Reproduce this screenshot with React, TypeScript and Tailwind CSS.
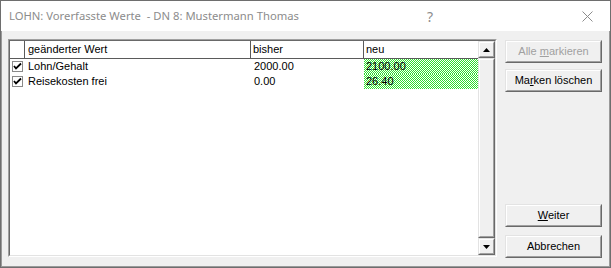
import React from "react";

const rows = [
  { label: "Lohn/Gehalt", bisher: "2000.00", neu: "2100.00" },
  { label: "Reisekosten frei", bisher: "0.00", neu: "26.40" },
];

const Raised = ({
  className = "",
  children,
}: {
  className?: string;
  children?: React.ReactNode;
}) => (
  <div
    className={`border border-t-[#e3e3e3] border-l-[#e3e3e3] border-b-[#696969] border-r-[#696969] bg-[#f0f0f0] ${className}`}
  >
    <div className="w-full h-full border border-t-white border-l-white border-b-[#a0a0a0] border-r-[#a0a0a0] flex items-center justify-center">
      {children}
    </div>
  </div>
);

const CheckBox = () => (
  <svg width="11" height="11" viewBox="0 0 11 11">
    <rect x="0.5" y="0.5" width="10" height="10" fill="#fff" stroke="#8a8a8a" />
    <path d="M2 5 L4 7.5 L9 2.5" fill="none" stroke="#000" strokeWidth="1.8" />
  </svg>
);

// dithered green selection marker
const Dither = ({ id }: { id: string }) => (
  <svg className="absolute inset-0 w-full h-full" shapeRendering="crispEdges">
    <defs>
      <pattern id={id} width="2" height="2" patternUnits="userSpaceOnUse">
        <rect x="0" y="0" width="1" height="1" fill="#2ee02e" />
        <rect x="1" y="1" width="1" height="1" fill="#2ee02e" />
      </pattern>
    </defs>
    <rect width="100%" height="100%" fill={`url(#${id})`} />
  </svg>
);

const App = () => {
  return (
    <div className="w-[611px] h-[268px] border border-[#6e6e6e] bg-white flex flex-col font-['Liberation_Sans',Arial,sans-serif] text-[11px] text-black overflow-hidden">
      {/* title bar */}
      <div className="h-[30px] shrink-0 flex items-center bg-white">
        <span className="pl-[8px] whitespace-pre text-[11.25px] text-[#8c8c8c] font-['Noto_Sans',sans-serif]">
          LOHN: Vorerfasste Werte  - DN 8: Mustermann Thomas
        </span>
        <span className="ml-auto w-[46px] text-center text-[14px] text-[#8c8c8c] font-['Noto_Sans',sans-serif] mr-[111px]">
          ?
        </span>
        <div className="w-[46px] flex justify-center">
          <svg width="11" height="11" viewBox="0 0 11 11">
            <path d="M0.5 0.5 L10.5 10.5 M10.5 0.5 L0.5 10.5" stroke="#8c8c8c" strokeWidth="1" />
          </svg>
        </div>
      </div>

      {/* client area */}
      <div className="flex-1 flex bg-[#f0f0f0] border-x border-b border-[#9a9a9a] pl-[6px] pt-[8px] pb-[8px]">
        {/* list box */}
        <div className="w-[489px] h-[218px] border border-t-[#a0a0a0] border-l-[#a0a0a0] border-b-white border-r-white">
          <div className="w-full h-full border border-t-[#696969] border-l-[#696969] border-b-[#e3e3e3] border-r-[#e3e3e3] bg-white flex">
            <div className="flex-1 flex flex-col">
              {/* header */}
              <div className="h-[18px] flex border-b border-[#5a5a5a] bg-white leading-[17px]">
                <div className="w-[15px] border-r border-[#5a5a5a]" />
                <div className="w-[226px] border-r border-[#5a5a5a] pl-[3px]">geänderter Wert</div>
                <div className="w-[113px] border-r border-[#5a5a5a] pl-[2px]">bisher</div>
                <div className="flex-1 pl-[2px]">neu</div>
              </div>
              {rows.map((r, i) => (
                <div key={r.label} className="h-[15px] flex leading-[15px]">
                  <div className="w-[15px] flex items-center pl-[2px]">
                    <CheckBox />
                  </div>
                  <div className="w-[226px] pl-[3px]">{r.label}</div>
                  <div className="w-[113px] pl-[3px]">{r.bisher}</div>
                  <div className="flex-1 relative">
                    <Dither id={`dither${i}`} />
                    <span className="relative pl-[2px]">{r.neu}</span>
                  </div>
                </div>
              ))}
            </div>
            {/* scrollbar */}
            <div className="w-[17px] flex flex-col bg-[#f0f0f0]">
              <Raised className="h-[17px] shrink-0">
                <svg width="7" height="4" viewBox="0 0 7 4">
                  <path d="M3.5 0 L7 4 L0 4 Z" fill="#000" />
                </svg>
              </Raised>
              <Raised className="flex-1" />
              <Raised className="h-[17px] shrink-0">
                <svg width="7" height="4" viewBox="0 0 7 4">
                  <path d="M0 0 L7 0 L3.5 4 Z" fill="#000" />
                </svg>
              </Raised>
            </div>
          </div>
        </div>

        {/* buttons */}
        <div className="ml-[8px] w-[97px] flex flex-col pt-[1px]">
          <Raised className="h-[23px]">
            <span className="text-[#a0a0a0]">
              Alle <u>m</u>arkieren
            </span>
          </Raised>
          <Raised className="h-[23px] mt-[6px]">
            <span>
              Ma<u>r</u>ken löschen
            </span>
          </Raised>
          <div className="flex-1" />
          <Raised className="h-[23px]">
            <span>
              <u>W</u>eiter
            </span>
          </Raised>
          <Raised className="h-[23px] mt-[8px]">
            <span>Abbrechen</span>
          </Raised>
        </div>
      </div>
    </div>
  );
};

export default App;
